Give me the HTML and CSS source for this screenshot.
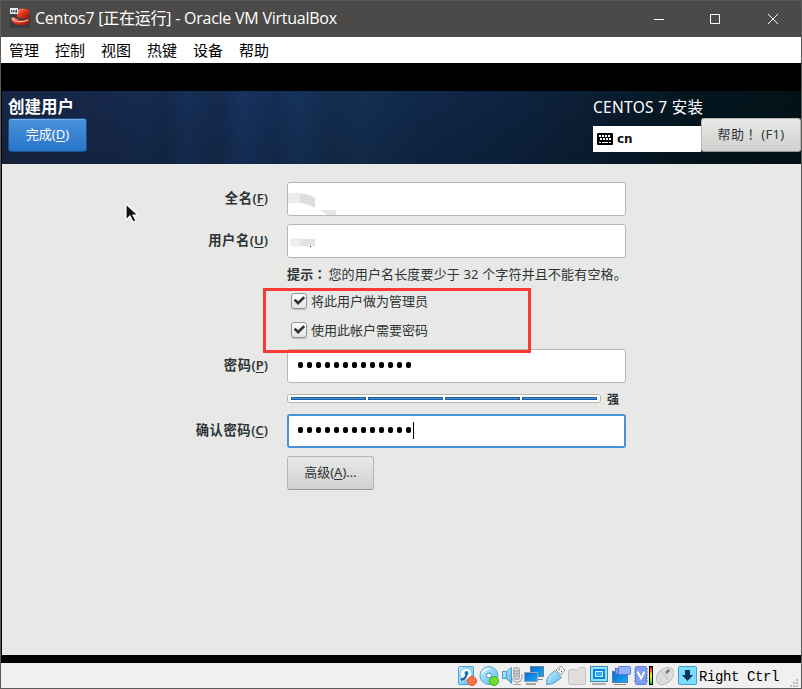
FILE: index.html
```html
<!DOCTYPE html>
<html lang="zh-CN">
<head>
  <meta charset="UTF-8" />
  <meta name="viewport" content="width=device-width, initial-scale=1.0"/>
  <title>Centos7 [正在运行] - Oracle VM VirtualBox</title>
  <link rel="stylesheet" href="styles.css">
</head>
<body>
  <div class="window">
    <header class="titlebar">
      <svg class="app-icon" width="20" height="20" viewBox="0 0 20 20">
        <defs>
          <linearGradient id="hat" x1="0" y1="0" x2="1" y2="1"><stop offset="0" stop-color="#ffb19a"/><stop offset=".4" stop-color="#ed3c20"/><stop offset="1" stop-color="#961006"/></linearGradient>
        </defs>
        <path d="M0 6h20v14H0z" fill="#393b42"/>
        <path d="M7 2Q13-1 19 2V9Q15 12 7 9z" fill="url(#hat)"/>
        <path d="M1 10Q4 8 7 11Q13 14 19 10V14Q17 18 9 17Q3 17 1 10z" fill="url(#hat)"/>
        <path d="M2 11Q8 16 18 12" stroke="#ffd0b8" fill="none"/>
        <path d="M0 0h8v6H0z" fill="#eee"/>
        <path d="M1.500 2v2h2V2M5 2v2h2M6.500 1.500v3" stroke="#35506b" fill="none"/>
      </svg>
      <h1>Centos7 [正在运行] - Oracle VM VirtualBox</h1>
      <svg class="window-buttons" width="144" height="16" viewBox="0 0 144 16">
        <path d="M0 8.500h10M56.500 3.500h9v9h-9zM114 3l10 10M124 3l-10 10" fill="none" stroke="#fff" stroke-width="1"/>
      </svg>
    </header>
    <nav class="menubar">
      <span>管理</span><span>控制</span><span>视图</span><span>热键</span><span>设备</span><span>帮助</span>
    </nav>

    <div class="screen">
      <div class="banner">
        <div class="banner-left">
          <h2>创建用户</h2>
          <button class="btn btn-done">完成(<u>D</u>)</button>
        </div>
        <div class="banner-right">
          <div class="product">CENTOS 7 安装</div>
          <div class="banner-tools">
            <div class="layout-indicator">
              <svg width="16" height="12" viewBox="0 0 16 12">
                <rect width="16" height="12" rx="1" fill="#000"/>
                <path d="M2 3h12M3 6h11" stroke="#fff" stroke-width="2" stroke-dasharray="2 1"/>
                <path d="M2 9.500h2M5 9.500h6M12 9.500h2" stroke="#fff"/>
              </svg>
              <b>cn</b>
            </div>
            <button class="btn btn-help">帮助<span class="mark" lang="zh-TW">！</span> (F1)</button>
          </div>
        </div>
      </div>

      <main>
        <form class="user-form">
          <label>全名<span>(<u>F</u>)</span></label>
          <div class="entry">
            <svg class="smudge" width="50" height="32" viewBox="0 0 50 32">
              <path d="M0 10h12l9 2 6 5v8l-7-3-8-2H0z" fill="#ececec"/>
              <path d="M12 11l9 1 6 3v9l-8-3-7-2z" fill="#ddd"/>
              <path d="M32 27h16v5h-9z" fill="#e8e8e8"/>
            </svg>
          </div>
          <label>用户名<span>(<u>U</u>)</span></label>
          <div class="entry">
            <svg class="smudge" width="50" height="32" viewBox="0 0 50 32">
              <path d="M3 13h9v9H4q-4-4-1-9z" fill="#eee"/>
              <path d="M12 14h15v7H12z" fill="#e3e3e3"/>
              <path d="M22 21h1v1H22z" fill="#222"/>
            </svg>
          </div>
          <p class="hint"><b>提示<span class="mark" lang="zh-TW">：</span></b>您的用户名长度要少于 32 个字符并且不能有空格。</p>
          <div class="checks">
            <div class="check"><svg width="16" height="16" viewBox="0 0 16 16"><path d="M3 6.500l4 4L14 3.500" /></svg><span>将此用户做为管理员</span></div>
            <div class="check"><svg width="16" height="16" viewBox="0 0 16 16"><path d="M3 6.500l4 4L14 3.500" /></svg><span>使用此帐户需要密码</span></div>
            <div class="highlight"></div>
          </div>
          <label>密码<span>(<u>P</u>)</span></label>
          <div class="entry password"><i></i><i></i><i></i><i></i><i></i><i></i><i></i><i></i><i></i><i></i><i></i><i></i><i></i></div>
          <div class="strength">
            <div class="meter"><span></span><span></span><span></span><span></span></div>
            <b>强</b>
          </div>
          <label>确认密码<span>(<u>C</u>)</span></label>
          <div class="entry password focused"><i></i><i></i><i></i><i></i><i></i><i></i><i></i><i></i><i></i><i></i><i></i><i></i><i></i><span class="caret"></span></div>
          <button type="button" class="btn btn-advanced">高级(<u>A</u>)...</button>
        </form>
        <svg class="pointer" width="14" height="21" viewBox="0 0 14 21">
          <path d="M1 1v16l4-4 3 6 3-1.500-3-5.500h5z" fill="#111" stroke="#fff" stroke-width="1.200"/>
        </svg>
      </main>
    </div>

    <footer class="statusbar">
      <svg class="status-icons" width="240" height="20" viewBox="0 0 240 20">
        <defs>
          <linearGradient id="sky" x1="0" y1="0" x2="1" y2="1"><stop offset="0" stop-color="#c9f0ff"/><stop offset="1" stop-color="#55b8f0"/></linearGradient>
          <linearGradient id="blue" x1="0" y1="0" x2="1" y2="1"><stop offset="0" stop-color="#0869cf"/><stop offset="1" stop-color="#16a9fa"/></linearGradient>
          <linearGradient id="load" x1="0" y1="0" x2="0" y2="1"><stop offset="0" stop-color="#f00"/><stop offset=".5" stop-color="#ff0"/><stop offset="1" stop-color="#0d0"/></linearGradient>
        </defs>
        <!-- hard disk -->
        <rect x="1.500" y=".5" width="15" height="18" rx="1" fill="url(#sky)" stroke="#49a0db"/>
        <circle cx="9" cy="8" r="6" fill="#fff" stroke="#70bde8"/>
        <path d="M4 14l4-2 2-4" stroke="#185ba0" stroke-width="2" fill="none"/><circle cx="9.500" cy="7" r="2" fill="#1979bc"/>
        <circle cx="15" cy="15" r="4.500" fill="#ff734c" stroke="#dc512f"/>
        <!-- optical disc -->
        <circle cx="32" cy="9.500" r="9" fill="url(#sky)" stroke="#61a9cd"/>
        <circle cx="32" cy="9.500" r="2.500" fill="#fff" stroke="#4298c5"/>
        <path d="M25 7q3-4 7-4" fill="none" stroke="#fff" stroke-width="1.500"/>
        <circle cx="37" cy="15" r="4.500" fill="#73dd31" stroke="#48aa1b"/>
        <!-- audio -->
        <rect x="56.500" y="1.500" width="6" height="12" rx="2" fill="#ccc" stroke="#aaa"/>
        <path d="M54 8q0 8 6 8t5-8M60 16v3M56 18.500h8M57 5h5M57 7.500h5M57 10h5" fill="none" stroke="#aaa" stroke-width="1.200"/>
        <path d="M45.500 5.500h4l5-4v16l-5-5h-4z" fill="url(#sky)" stroke="#4b9bc7"/><path d="M49.500 6v7" stroke="#4b9bc7"/>
        <!-- network -->
        <path d="M75 13.500h11" stroke="#888"/><rect x="73.500" y=".5" width="13" height="10" fill="url(#blue)" stroke="#668090"/>
        <rect x="67.500" y="6.500" width="13" height="9" fill="url(#blue)" stroke="#8fa5b3"/><path d="M69 18h10" stroke="#888" stroke-width="1.500"/>
        <!-- usb -->
        <path d="M99 4l5-4 4 4-4 5z" fill="#eee" stroke="#999"/><path d="M102 3l1 1M104 5l1 1" stroke="#555"/>
        <path d="M89.500 18.500q0-7 3-9l5-5 7 7-5 4q-3 3-10 3z" fill="url(#sky)" stroke="#4e9dcb"/>
        <!-- shared folder -->
        <path d="M111.500 4.500l2-1h7l2-2h5l1 1v14q0 2-2 2h-13q-2 0-2-2z" fill="#dedede" stroke="#c3c3c3"/>
        <!-- display -->
        <rect x="133.500" y=".5" width="17" height="15" fill="#8ce4ff" stroke="#4188b5"/><rect x="136" y="3" width="12" height="10" fill="#0d86e4"/><path d="M138.500 5.500h7v5h-7z" fill="#35adf8" stroke="#d6faff"/><path d="M135 18h14" stroke="#999" stroke-width="1.500"/>
        <!-- recording -->
        <rect x="155.500" y="5.500" width="15" height="11" fill="url(#blue)" stroke="#607f9b"/><path d="M157 18.500h12" stroke="#888"/>
        <path d="M162 3l-3.500-1v6l3.500-1" fill="#779bf0" stroke="#567acc"/>
        <rect x="161.500" y=".5" width="12" height="8" rx="1" fill="#91b0ff" stroke="#567acc"/>
        <!-- cpu -->
        <path d="M177 3h14M177 6h14M177 9h14M177 12h14M177 15h14" stroke="#5473b4"/>
        <rect x="178.500" y=".5" width="11" height="18" rx="1" fill="#819cf0" stroke="#6582d6"/><path d="M180.500 5.500l3.500 7 3.500-7" fill="none" stroke="#fff" stroke-width="1.800"/>
        <rect x="192" y="0" width="4" height="19" fill="#000"/><rect x="193" y="1" width="2" height="17" fill="url(#load)"/>
        <!-- mouse -->
        <ellipse cx="208" cy="10" rx="10" ry="7" transform="rotate(-43 208 10)" fill="#ddd" stroke="#bcbcbc"/><path d="M202 5q5 1 9 9M209 8l5-5" fill="none" stroke="#bbb"/><path d="M209 7l3-3" stroke="#777" stroke-width="2.500"/>
        <!-- keyboard capture -->
        <rect x="221.500" y=".5" width="18" height="18" rx="1" fill="#7bdcff" stroke="#3e9fcf"/><path d="M228 4h5v5h3l-5.500 6L225 9h3z" fill="#07365f"/>
      </svg>
      <span class="host-key">Right Ctrl</span>
      <svg class="grip" width="8" height="8" viewBox="0 0 8 8"><path d="M6 0h2v2H6zM3 3h2v2H3zM6 3h2v2H6zM0 6h2v2H0zM3 6h2v2H3zM6 6h2v2H6z" fill="#bdbdbd"/></svg>
    </footer>
  </div>
</body>
</html>
```
FILE: styles.css
```css
* {
  box-sizing: border-box;
}
body {
  margin: 0;
  font-family: "Noto Sans", "Noto Sans CJK SC", sans-serif;
  color: #2e3436;
}
h1, h2, p {
  margin: 0;
}
u {
  text-underline-offset: 2px;
}
/* full-width punctuation centred in its cell */
.mark {
  font-family: "Noto Sans CJK TC", sans-serif;
  line-height: 1;
}
.window {
  width: 802px;
  height: 689px;
  border: 1px solid #5a5a59;
  background: #000;
  display: flex;
  flex-direction: column;
  overflow: hidden;
}
.titlebar {
  height: 36px;
  flex: none;
  background: #4b4a48;
  display: flex;
  align-items: center;
  padding-left: 9px;
  color: #fff;
}
.app-icon {
  margin-bottom: 2px;
}
.titlebar h1 {
  margin-left: 5px;
  font: 16px/34px "Open Sans", "Noto Sans CJK SC", sans-serif;
  letter-spacing: -0.24px;
  margin-bottom: 2px;
  white-space: nowrap;
}
.window-buttons {
  margin-left: auto;
  margin-right: 3px;
}
.menubar {
  height: 26px;
  flex: none;
  background: #fff;
  display: flex;
  gap: 16px;
  padding-left: 8px;
  color: #000;
  font: 15px/26px "Noto Sans CJK SC", sans-serif;
}
.screen {
  height: 600px;
  flex: none;
  padding: 28px 0 8px 1px;
  background: #000;
}

/* installer header */
.banner {
  height: 73px;
  display: flex;
  justify-content: space-between;
  color: #fff;
  background:
    linear-gradient(rgba(0,0,0,0), rgba(0,0,0,0.15)),
    linear-gradient(90deg, #172644 0, #16284a 12%, #152b51 18%, #14284a 20%, #162f57 23%, #142a4e 27%, #17335f 30%, #142d53 34%, #16335b 37%, #132c4e 41%, #142f52 45%, #10284a 52%, #0d2340 64%, #0b1e33 74%, #03161f 86%, #021318);
}
.banner-left {
  padding: 4px 0 0 6px;
}
.banner-left h2 {
  font-size: 16.5px;
  line-height: 23px;
}
.btn {
  display: block;
  height: 34px;
  padding: 0 0 2px;
  border: 1px solid #b5b5b2;
  border-bottom-color: #989896;
  border-radius: 3px;
  background: linear-gradient(#e9e9e8, #d0d0ce);
  color: #2e3436;
  font: 13px/30px "Noto Sans", "Noto Sans CJK SC", sans-serif;
}
.btn-done {
  width: 79px;
  border-color: #174f88;
  background: linear-gradient(#4a90d9, #2875c8);
  box-shadow: inset 0 1px #77aee5;
  color: #fff;
}
.banner-right {
  width: 208px;
  padding-top: 5px;
}
.product {
  font-size: 15.5px;
  line-height: 22px;
  letter-spacing: 0.3px;
}
.banner-tools {
  display: flex;
  align-items: flex-end;
}
.layout-indicator {
  width: 108px;
  height: 26px;
  padding-left: 4px;
  background: #fff;
  color: #111;
  display: flex;
  align-items: center;
  gap: 4px;
  font: 12px "DejaVu Sans", sans-serif;
}
.btn-help {
  width: 100px;
  letter-spacing: 0.3px;
  white-space: nowrap;
}

/* create user form */
main {
  position: relative;
  height: 491px;
  padding-top: 18px;
  background: #e8e8e6;
}
.user-form {
  display: grid;
  grid-template-columns: 266px 339px;
  grid-template-rows: 42px 34px 29px 62px 34px 31px 42px 34px;
  column-gap: 19px;
}
label {
  text-align: right;
  font-size: 13.3px;
  font-weight: bold;
  line-height: 32px;
  letter-spacing: 0.6px;
}
label span {
  font-size: 13px;
  font-weight: 600;
  letter-spacing: 0;
}
.entry {
  height: 34px;
  border: 1px solid #b6b6b3;
  border-radius: 3px;
  background: #fff;
}
.smudge {
  display: block;
}
.hint, .checks, .strength, .btn-advanced {
  grid-column: 2;
}
.hint {
  font-size: 13px;
  line-height: 32px;
  letter-spacing: 0.15px;
  white-space: nowrap;
}
.hint b {
  margin-right: 2px;
}
.checks {
  position: relative;
  padding-left: 4px;
}
.check {
  height: 29px;
  display: flex;
  align-items: center;
  gap: 4px;
  padding-bottom: 2px;
  font-size: 13px;
  line-height: 26px;
}
.check svg {
  border: 1px solid #969693;
  border-radius: 3px;
  background: linear-gradient(#fff, #e2e2e0);
  box-shadow: 0 1px 1px #bbb;
}
.check path {
  fill: none;
  stroke: #2e3436;
  stroke-width: 3;
}
.highlight {
  position: absolute;
  left: -24px;
  top: 1px;
  width: 268px;
  height: 65px;
  border: 3px solid #fc3835;
}
.password {
  display: flex;
  gap: 4px;
  padding: 12px 0 0 10px;
}
.password i {
  width: 5px;
  height: 6px;
  border-radius: 2px;
  background: #000;
}
.focused {
  border: 2px solid #4a90d9;
  padding: 11px 0 0 9px;
}
.caret {
  width: 1px;
  height: 17px;
  margin: -5px 0 0 -2px;
  background: #000;
}
.strength {
  display: flex;
  align-items: center;
  gap: 6px;
  font-size: 12px;
}
.meter {
  width: 314px;
  height: 9px;
  display: flex;
  gap: 2px;
  padding: 2px 3px;
  border: 1px solid #b6b6b3;
  border-radius: 3px;
  background: #fff;
}
.meter span {
  flex: 1;
  height: 3px;
  border: 1px solid #1c5d9f;
  background: #4a90d9;
}
.btn-advanced {
  width: 87px;
}
.pointer {
  position: absolute;
  left: 123px;
  top: 39px;
}

/* VirtualBox status bar */
.statusbar {
  height: 25px;
  flex: none;
  background: #f0f0f0;
  display: flex;
  align-items: center;
  padding-left: 456px;
  color: #000;
}
.status-icons {
  flex: none;
}
.host-key {
  margin: 2px 0 0 2px;
  font: 14px/22px "Liberation Mono", monospace;
  letter-spacing: -0.4px;
  white-space: nowrap;
}
.grip {
  margin: 14px 3px 0 auto;
}
```
